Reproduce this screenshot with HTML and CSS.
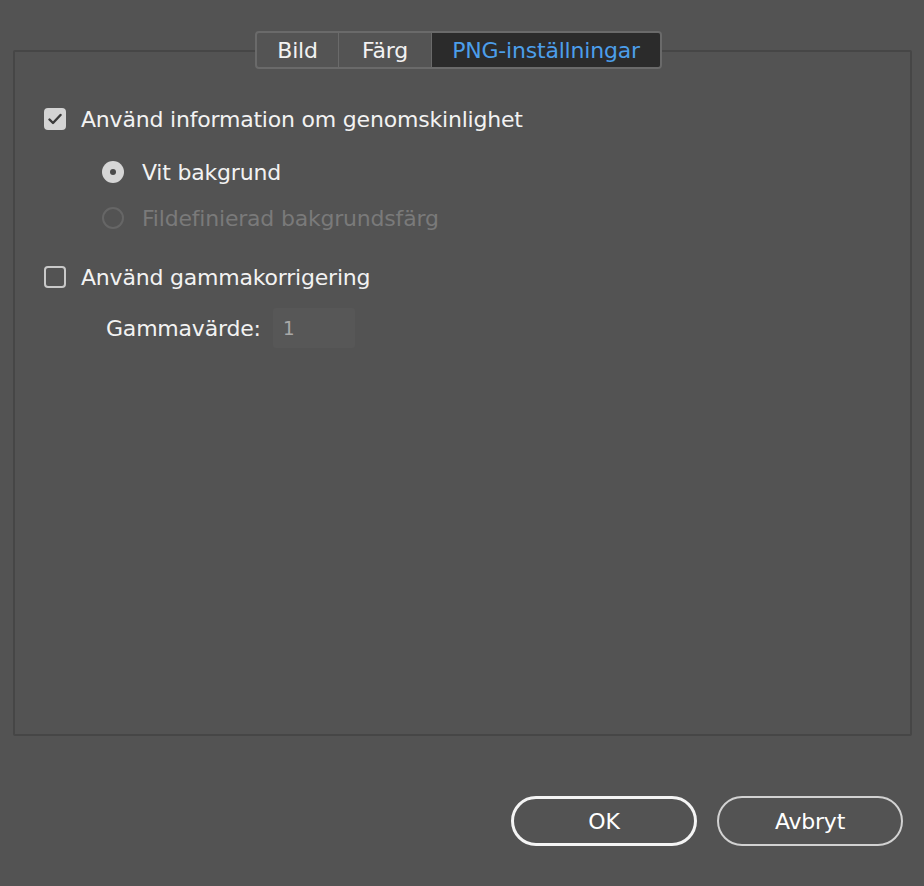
FILE: index.html
```html
<!DOCTYPE html>
<html lang="sv">
<head>
<meta charset="utf-8">
<title>PNG-inställningar</title>
<link rel="stylesheet" href="styles.css">
</head>
<body>
<div class="dialog">
  <div class="tabs">
    <div class="tab tab-bild">Bild</div>
    <div class="tab tab-farg">Färg</div>
    <div class="tab tab-png active">PNG-inställningar</div>
  </div>
  <div class="panel">
    <div class="row row-first">
      <span class="check checked">
        <svg width="14" height="12" viewBox="0 0 14 12"><path d="M1.5 6.5 L5 10 L12.5 2" fill="none" stroke="#3a3a3a" stroke-width="2.4" stroke-linecap="round" stroke-linejoin="round"/></svg>
      </span>
      <span class="label">Använd information om genomskinlighet</span>
    </div>
    <div class="row row-radio1 indent">
      <span class="radio selected"></span>
      <span class="label">Vit bakgrund</span>
    </div>
    <div class="row row-radio2 indent">
      <span class="radio disabled"></span>
      <span class="label muted">Fildefinierad bakgrundsfärg</span>
    </div>
    <div class="row row-gamma">
      <span class="check"></span>
      <span class="label">Använd gammakorrigering</span>
    </div>
    <div class="row row-value">
      <span class="label">Gammavärde:</span>
      <span class="field">1</span>
    </div>
  </div>
  <div class="buttons">
    <div class="btn btn-primary">OK</div>
    <div class="btn btn-secondary">Avbryt</div>
  </div>
</div>
</body>
</html>
```
FILE: styles.css
```css
html, body {
  margin: 0;
  padding: 0;
  background: #535353;
}
body {
  width: 924px;
  height: 886px;
  overflow: hidden;
  font-family: "DejaVu Sans", Verdana, sans-serif;
  font-size: 22px;
  letter-spacing: -0.2px;
  color: #f2f2f2;
}
.dialog {
  display: flex;
  flex-direction: column;
  padding: 0 12px 0 13px;
}
.tabs {
  position: relative;
  z-index: 2;
  display: flex;
  align-self: flex-start;
  margin: 31px 0 0 242px;
  height: 38px;
  box-sizing: border-box;
  border: 2px solid #6a6a6a;
  border-radius: 4px;
  background: #545454;
  overflow: hidden;
}
.tab {
  display: flex;
  align-items: center;
  justify-content: center;
  box-sizing: border-box;
  height: 100%;
  color: #f2f2f2;
}
.tab-bild { width: 82px; border-right: 1px solid #6a6a6a; }
.tab-farg { width: 93px; border-right: 1px solid #6a6a6a; }
.tab-png { width: 228px; }
.tab.active {
  background: #2b2b2b;
  color: #4c9eea;
}
.panel {
  margin-top: -19px;
  height: 686px;
  box-sizing: border-box;
  border: 2px solid #464646;
  border-radius: 2px;
  padding: 54px 0 0 29px;
}
.row {
  display: flex;
  align-items: center;
  height: 26px;
}
.indent { padding-left: 58px; }
.row-radio1 { margin-top: 27px; }
.row-radio2 { margin-top: 20px; }
.row-gamma { margin-top: 33px; }
.row-value { margin-top: 25px; padding-left: 62px; }
.check {
  width: 22px;
  height: 22px;
  box-sizing: border-box;
  border: 2px solid #c9c9c9;
  border-radius: 4px;
  margin-right: 15px;
  display: flex;
  align-items: center;
  justify-content: center;
}
.check.checked {
  background: #d4d4d4;
  border-color: #d4d4d4;
}
.radio {
  width: 22px;
  height: 22px;
  box-sizing: border-box;
  border-radius: 50%;
  margin-right: 18px;
  flex: none;
}
.radio.selected {
  background: #d6d6d6;
  position: relative;
}
.radio.selected::after {
  content: "";
  position: absolute;
  left: 8px;
  top: 8px;
  width: 6px;
  height: 6px;
  border-radius: 50%;
  background: #4a4a4a;
}
.radio.disabled {
  border: 2px solid #666666;
}
.label { white-space: nowrap; }
.muted { color: #7a7a7a; }
.field {
  margin-left: 12px;
  width: 82px;
  height: 40px;
  box-sizing: border-box;
  background: #575757;
  border-radius: 3px;
  color: #a8a8a8;
  font-family: "DejaVu Sans Mono", monospace;
  font-size: 19px;
  padding-left: 10px;
  display: flex;
  align-items: center;
}
.buttons {
  display: flex;
  justify-content: flex-end;
  gap: 20px;
  margin-top: 60px;
  padding-right: 9px;
}
.btn {
  width: 186px;
  height: 50px;
  box-sizing: border-box;
  border-radius: 25px;
  display: flex;
  align-items: center;
  justify-content: center;
  color: #ffffff;
}
.btn-primary { border: 3px solid #f4f4f4; }
.btn-secondary { border: 2px solid #d2d2d2; }
```
